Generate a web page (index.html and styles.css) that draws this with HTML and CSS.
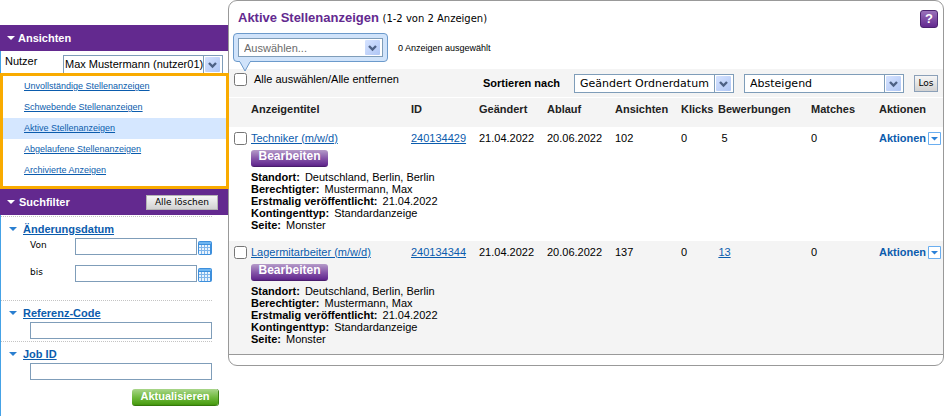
FILE: index.html
```html
<!DOCTYPE html>
<html lang="de">
<head>
<meta charset="utf-8">
<title>Aktive Stellenanzeigen</title>
<link rel="stylesheet" href="styles.css">
</head>
<body>
<svg class="sprite" width="0" height="0" aria-hidden="true">
  <defs>
    <linearGradient id="blue" x1="0" y1="0" x2="1" y2="1"><stop offset="0" stop-color="#d6e3ff"/><stop offset="1" stop-color="#afc6f5"/></linearGradient>
  </defs>
  <symbol id="drop" viewBox="0 0 15 15">
    <rect width="15" height="15" rx="1" fill="url(#blue)"/>
    <path d="M4 6l3.500 3.500L11 6" fill="none" stroke="#4d6185" stroke-width="2.400"/>
  </symbol>
  <symbol id="calendar" viewBox="0 0 14 14">
    <rect width="14" height="14" rx="2" fill="#3d8fdc"/>
    <rect x="1" y="1" width="12" height="2" fill="#6db4f0"/>
    <path d="M1 4h11v9H1z" fill="#e9f3fd"/>
    <path d="M3.500 4v9M6.500 4v9M9.500 4v9M1 6.500h11M1 9.500h11" stroke="#7fb5ea" fill="none"/>
  </symbol>
  <symbol id="tri" viewBox="0 0 8 4"><path d="M0 0h8L4 4z" fill="currentColor"/></symbol>
</svg>
<div class="layout">
  <aside class="sidebar">
    <h2 class="bar"><svg class="tri"><use href="#tri"/></svg>Ansichten</h2>
    <div class="user-row">
      <label for="user">Nutzer</label>
      <span class="select user-select">
        <select id="user"><option>Max Mustermann (nutzer01)</option></select>
        <svg class="drop"><use href="#drop"/></svg>
      </span>
    </div>
    <nav class="views">
      <a href="#"><span>Unvollständige Stellenanzeigen</span></a>
      <a href="#"><span>Schwebende Stellenanzeigen</span></a>
      <a href="#" class="current"><span>Aktive Stellenanzeigen</span></a>
      <a href="#"><span>Abgelaufene Stellenanzeigen</span></a>
      <a href="#"><span>Archivierte Anzeigen</span></a>
    </nav>
    <h2 class="bar filter-bar"><svg class="tri"><use href="#tri"/></svg>Suchfilter<button type="button" class="plain clear">Alle löschen</button></h2>
    <form class="filters">
      <section class="dates">
        <h3><svg class="tri"><use href="#tri"/></svg><a href="#">Änderungsdatum</a></h3>
        <div class="date-row"><label for="from">Von</label><input id="from" type="text"><svg class="calendar"><use href="#calendar"/></svg></div>
        <div class="date-row"><label for="to">bis</label><input id="to" type="text"><svg class="calendar"><use href="#calendar"/></svg></div>
      </section>
      <section>
        <h3><svg class="tri"><use href="#tri"/></svg><a href="#" id="ref-label">Referenz-Code</a></h3>
        <input class="wide" type="text" aria-labelledby="ref-label">
      </section>
      <section>
        <h3><svg class="tri"><use href="#tri"/></svg><a href="#" id="job-label">Job ID</a></h3>
        <input class="wide" type="text" aria-labelledby="job-label">
      </section>
      <button type="button" class="glossy update">Aktualisieren</button>
    </form>
  </aside>

  <main class="panel">
    <header class="title-row">
      <h1>Aktive Stellenanzeigen <small>(1-2 von 2 Anzeigen)</small></h1>
      <button type="button" class="help">?</button>
    </header>
    <div class="bulk">
      <div class="bubble">
        <span class="select">
          <select aria-label="Aktion" class="muted"><option>Auswählen...</option></select>
          <svg class="drop"><use href="#drop"/></svg>
        </span>
        <svg class="tail" viewBox="0 0 12 11"><path d="M1 0v1L6 10L11 1V0" fill="#d0e3fa"/><path d="M1 1L6 10L11 1" fill="none" stroke="#6c9acb"/></svg>
      </div>
      <span class="count">0 Anzeigen ausgewählt</span>
    </div>
    <div class="toolbar">
      <label class="all"><input type="checkbox">Alle auswählen/Alle entfernen</label>
      <label class="sort" for="sort">Sortieren nach</label>
      <span class="select boxed">
        <select id="sort"><option>Geändert Ordnerdatum</option></select>
        <svg class="drop"><use href="#drop"/></svg>
      </span>
      <span class="select boxed">
        <select aria-label="Reihenfolge"><option>Absteigend</option></select>
        <svg class="drop"><use href="#drop"/></svg>
      </span>
      <button type="button" class="plain go">Los</button>
    </div>
    <table>
      <colgroup><col class="c-check"><col><col class="c-date"><col class="c-date"><col class="c-date"><col class="c-views"><col class="c-clicks"><col class="c-apps"><col class="c-date"><col class="c-menu"></colgroup>
      <thead>
        <tr><th></th><th>Anzeigentitel</th><th>ID</th><th>Geändert</th><th>Ablauf</th><th>Ansichten</th><th>Klicks</th><th>Bewerbungen</th><th>Matches</th><th>Aktionen</th></tr>
      </thead>
      <tbody>
        <tr>
          <td><input type="checkbox" aria-label="Techniker (m/w/d)"></td>
          <td>
            <a href="#">Techniker (m/w/d)</a>
            <button type="button" class="glossy edit">Bearbeiten</button>
            <ul>
              <li><b>Standort:</b>Deutschland, Berlin, Berlin</li>
              <li><b>Berechtigter:</b>Mustermann, Max</li>
              <li><b>Erstmalig veröffentlicht:</b>21.04.2022</li>
              <li><b>Kontingenttyp:</b>Standardanzeige</li>
              <li><b>Seite:</b>Monster</li>
            </ul>
          </td>
          <td><a href="#">240134429</a></td><td>21.04.2022</td><td>20.06.2022</td><td>102</td><td>0</td><td><span class="num">5</span></td><td>0</td>
          <td><a href="#" class="menu">Aktionen<svg class="menu-icon" viewBox="0 0 13 13"><path d="M.5.5h12v12H.5z" fill="#fff" stroke="#6aaef0"/><path d="M3 5h7L6.500 8.500z" fill="#2a80d8"/></svg></a></td>
        </tr>
        <tr>
          <td><input type="checkbox" aria-label="Lagermitarbeiter (m/w/d)"></td>
          <td>
            <a href="#">Lagermitarbeiter (m/w/d)</a>
            <button type="button" class="glossy edit">Bearbeiten</button>
            <ul>
              <li><b>Standort:</b>Deutschland, Berlin, Berlin</li>
              <li><b>Berechtigter:</b>Mustermann, Max</li>
              <li><b>Erstmalig veröffentlicht:</b>21.04.2022</li>
              <li><b>Kontingenttyp:</b>Standardanzeige</li>
              <li><b>Seite:</b>Monster</li>
            </ul>
          </td>
          <td><a href="#">240134344</a></td><td>21.04.2022</td><td>20.06.2022</td><td>137</td><td>0</td><td><a href="#" class="num">13</a></td><td>0</td>
          <td><a href="#" class="menu">Aktionen<svg class="menu-icon" viewBox="0 0 13 13"><path d="M.5.5h12v12H.5z" fill="#fff" stroke="#6aaef0"/><path d="M3 5h7L6.500 8.500z" fill="#2a80d8"/></svg></a></td>
        </tr>
      </tbody>
    </table>
  </main>
</div>
</body>
</html>
```
FILE: styles.css
```css
* { box-sizing: border-box; }

body {
  margin: 0;
  background: #fff;
  color: #000;
  font: 11px/12px "Liberation Sans", Arial, sans-serif;
}

h1, h2, h3, ul { margin: 0; padding: 0; font-size: 11px; }
ul { list-style: none; }
a { color: #0b5cad; }
svg { display: block; flex: none; }
.sprite { position: absolute; }
button, input, select { margin: 0; font-family: inherit; }

.layout {
  display: grid;
  grid-template-columns: 228px 1fr;
  align-items: start;
}

/* Sidebar */
.sidebar { padding-top: 25px; }

.bar {
  display: flex;
  align-items: center;
  gap: 3px;
  height: 26px;
  padding: 0 10px 0 7px;
  background: #63298f;
  color: #fff;
}
.filter-bar { gap: 4px; }
.tri { width: 8px; height: 4px; }

.user-row {
  display: flex;
  align-items: center;
  justify-content: space-between;
  height: 22px;
  padding: 0 5px 0 4px;
  border-left: 1px solid #45a2e6;
}
.user-row label { padding-bottom: 2px; }

.views {
  position: relative;
  margin-right: -1px;
  padding-bottom: 5px;
  border: 3px solid #f9ab00;
}
.views a {
  display: block;
  padding-left: 21px;
  font-size: 9px;
  line-height: 21px;
}
.views .current { background: #d5e7ff; }

.plain {
  border: 1px solid #b4b4b4;
  background: linear-gradient(#f6f6f6, #d2d2d2);
  color: #000;
  font: 9px/12px "DejaVu Sans", Verdana, sans-serif;
  padding: 0;
}
.clear { width: 72px; height: 15px; margin-left: auto; }

.filters {
  display: flex;
  flex-direction: column;
  padding: 1px 16px 10px 0;
  border: solid #45a2e6;
  border-width: 0 0 1px 1px;
}
.filters section { padding-top: 6px; border-top: 1px dotted #c4c4c4; height: 41px; }
.filters .dates { height: 84px; }
.filters h3 { display: flex; align-items: center; gap: 6px; padding-left: 8px; color: #2a7fd0; margin-bottom: 3px; }
.filters input { height: 17px; border: 1px solid #7f9db9; padding: 0 3px; background: #fff; }
.date-row {
  display: grid;
  grid-template-columns: 44px 122px 14px;
  column-gap: 1px;
  align-items: center;
  padding-left: 29px;
  margin-bottom: 10px;
}
.date-row label { font: 9px/12px "DejaVu Sans", Verdana, sans-serif; padding-bottom: 4px; }
.calendar { width: 14px; height: 14px; margin-top: 2px; }
.filters .wide { display: block; width: 182px; margin-left: 29px; }

.glossy {
  display: block;
  height: 17px;
  border: 0;
  border-radius: 3px;
  padding: 0 7px 3px;
  color: #fff;
  font-weight: bold;
  line-height: 13px;
}
.update {
  align-self: flex-end;
  margin: 7px -6px 0 0;
  width: 86px;
  font-size: 11px;
  background: linear-gradient(#a9d68a, #6fb93c 50%, #4a9d12 90%, #2c6a08);
  box-shadow: 1px 0 0 #3b7f12;
}
.edit {
  width: 77px;
  margin: 6px 0 4px;
  font-size: 12px;
  background: linear-gradient(#b59bc9, #8555a8 50%, #63298f 90%, #3f175f);
}

/* Select boxes with a drawn arrow */
.select {
  display: grid;
  grid-template-columns: 1fr 19px;
  align-items: center;
  border: 1px solid #7f9db9;
  background: #fff;
}
.select select {
  grid-area: 1 / 1 / 2 / 3;
  appearance: none;
  width: 100%;
  height: 100%;
  border: 0;
  padding: 0 0 0 5px;
  background: transparent;
  color: #000;
  font-size: 11px;
}
.select .muted { color: #6b6b6b; }
.drop {
  grid-area: 1 / 2;
  justify-self: center;
  width: 15px;
  height: 15px;
  pointer-events: none;
}
.user-select { width: 160px; height: 18px; border-bottom: 0; margin-top: 3px; }
.user-select select { padding-left: 1px; }
.user-select::before, .boxed::before {
  content: "";
  grid-area: 1 / 2;
  align-self: stretch;
  border-left: 1px solid #7f9db9;
}

/* Main panel */
.panel {
  border: 1px solid #999;
  border-radius: 9px;
  padding-bottom: 10px;
}

.title-row {
  display: flex;
  justify-content: space-between;
  padding: 9px 5px 0 9px;
  height: 32px;
}
h1 { color: #63298f; font-size: 13px; line-height: 16px; }
h1 small { color: #000; font: 10px/16px "DejaVu Sans", Verdana, sans-serif; }
.help {
  width: 18px;
  height: 18px;
  padding: 0;
  border: 1px solid #4c2370;
  border-radius: 3px;
  background: linear-gradient(#9a72ba, #63298f);
  color: #fff;
  font-size: 13px;
  font-weight: bold;
  line-height: 16px;
}

.bulk {
  display: flex;
  align-items: center;
  gap: 10px;
  padding: 0 4px 7px;
}
.bubble {
  position: relative;
  width: 155px;
  padding: 4px;
  border: 1px solid #6c9acb;
  border-radius: 4px;
  background: #d0e3fa;
}
.bubble .select { height: 19px; }
.tail { position: absolute; left: 5px; top: 100%; width: 12px; height: 11px; }
.count { font-size: 9px; }

.toolbar {
  display: flex;
  align-items: center;
  height: 28px;
  padding: 0 5px;
  background: #f4f4f4;
}
input[type="checkbox"] { width: 13px; height: 13px; }
.all { display: flex; align-items: center; gap: 7px; margin-right: auto; padding-bottom: 8px; }
.sort { font-weight: bold; margin-right: 14px; }
.boxed { width: 160px; height: 19px; margin-right: 10px; }
.boxed select { font-family: "DejaVu Sans", Verdana, sans-serif; }
.go { width: 24px; height: 17px; border-color: #8ba0b8; }

table {
  width: 100%;
  table-layout: fixed;
  border-collapse: collapse;
  border-top: 1px solid #fff;
  border-bottom: 1px solid #999;
}
.c-check { width: 22px; }
.c-date { width: 68px; }
.c-views { width: 66px; }
.c-clicks { width: 37px; }
.c-apps { width: 93px; }
.c-menu { width: 64px; }
th { height: 29px; padding: 0 0 7px; text-align: left; color: #222; white-space: nowrap; }
thead tr, tbody tr:nth-child(even) { background: #f4f4f4; }
td { padding: 5px 0; height: 114px; vertical-align: top; white-space: nowrap; }
td:first-child { padding-left: 5px; }
li b { margin-right: 5px; }
.num { display: inline-block; min-width: 13px; text-align: center; }
.menu { display: flex; align-items: center; gap: 2px; font-weight: bold; text-decoration: none; }
.menu-icon { width: 13px; height: 13px; }
```
